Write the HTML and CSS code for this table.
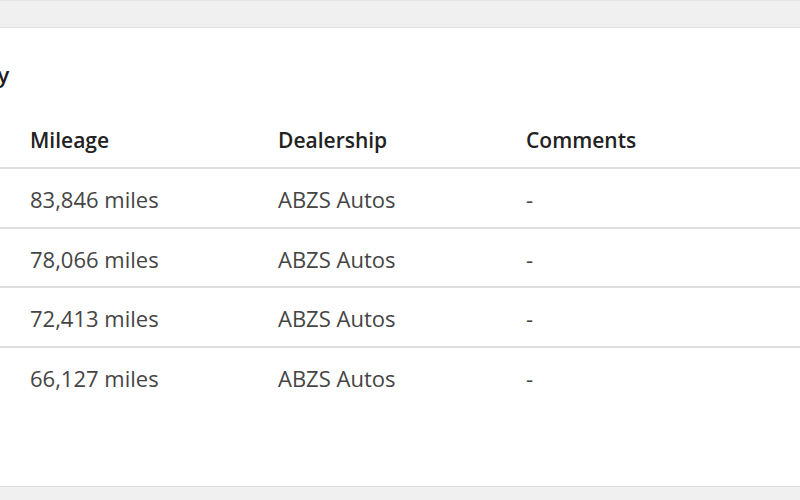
FILE: index.html
```html
<!DOCTYPE html>
<html lang="en">
<head>
  <meta charset="UTF-8">
  <meta name="viewport" content="width=device-width, initial-scale=1.0">
  <title>Service History</title>
  <link rel="stylesheet" href="styles.css">
</head>
<body>
  <div class="topbar"></div>
  <div class="card">
    <h2 class="titulo">Service History</h2>
    <table class="historial">
      <colgroup>
        <col class="col-fecha">
        <col class="col-dato">
        <col class="col-dato">
        <col>
      </colgroup>
      <thead>
        <tr>
          <th>Date</th>
          <th>Mileage</th>
          <th>Dealership</th>
          <th>Comments</th>
        </tr>
      </thead>
      <tbody>
        <tr>
          <td>12/03/2021</td>
          <td>83,846 miles</td>
          <td>ABZS Autos</td>
          <td>-</td>
        </tr>
        <tr>
          <td>11/02/2020</td>
          <td>78,066 miles</td>
          <td>ABZS Autos</td>
          <td>-</td>
        </tr>
        <tr>
          <td>10/01/2019</td>
          <td>72,413 miles</td>
          <td>ABZS Autos</td>
          <td>-</td>
        </tr>
        <tr>
          <td>09/04/2018</td>
          <td>66,127 miles</td>
          <td>ABZS Autos</td>
          <td>-</td>
        </tr>
      </tbody>
    </table>
  </div>
  <div class="bottombar"></div>
</body>
</html>
```

FILE: styles.css
```css
body {
  margin: 0;
  height: 500px;
  overflow: hidden;
  background: #f0f0f0;
  font-family: "Open Sans", Lato, sans-serif;
}
.topbar {
  height: 26px;
  border-top: 1px solid #e6e6e6;
  background: #f0f0f0;
}
.card {
  height: 458px;
  margin-left: -190px;
  margin-right: -40px;
  padding-left: 30px;
  background: #fff;
  border-top: 1px solid #e0e0e0;
  border-bottom: 1px solid #dcdcdc;
}
.titulo {
  margin: 0;
  padding-top: 31px;
  padding-left: 11px;
  height: 53px;
  font-size: 22px;
  font-weight: 600;
  color: #1c1c1c;
}
.historial {
  width: 100%;
  table-layout: fixed;
  border-collapse: collapse;
}
.col-fecha {
  width: 190px;
}
.col-dato {
  width: 248px;
}
.historial th,
.historial td {
  padding: 0;
  text-align: left;
  white-space: nowrap;
}
.historial th {
  height: 55px;
  font-size: 21px;
  font-weight: 600;
  color: #222;
  border-bottom: 2px solid #dedede;
}
.historial td {
  height: 54.5px;
  padding-top: 3px;
  font-size: 22px;
  color: #454545;
  border-bottom: 2px solid #dedede;
}
.historial tbody tr:last-child td {
  border-bottom: none;
}
.bottombar {
  height: 14px;
}
```
